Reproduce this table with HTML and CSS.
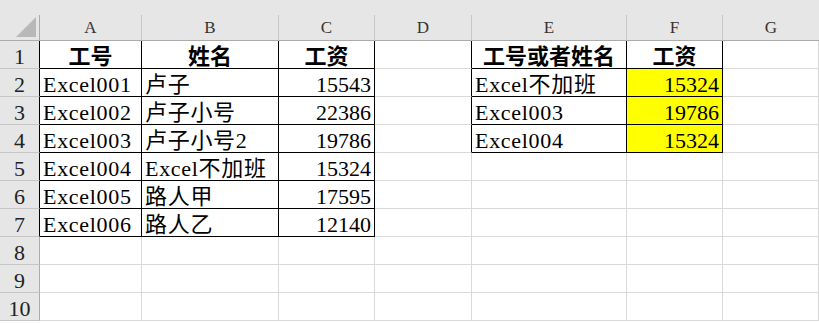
FILE: index.html
```html
<!DOCTYPE html>
<html lang="zh">
<head>
<meta charset="utf-8">
<title>Sheet</title>
<link rel="stylesheet" href="styles.css">
</head>
<body>
<div class="top"></div>
<div class="sheet">
  <div class="corner"><svg class="tri" width="20" height="20" viewBox="0 0 20 20"><polygon points="20,0 20,20 0,20" fill="#b8b8b8"/></svg></div>
  <div class="ch">A</div><div class="ch">B</div><div class="ch">C</div><div class="ch">D</div><div class="ch">E</div><div class="ch">F</div><div class="ch last">G</div>

  <div class="rh kb">1</div>
  <div class="c k hd">工号</div><div class="c k hd">姓名</div><div class="c k hd">工资</div><div class="c kr"></div>
  <div class="c k hd">工号或者姓名</div><div class="c k hd">工资</div><div class="c"></div>

  <div class="rh kb">2</div>
  <div class="c k tx">Excel001</div><div class="c k tx">卢子</div><div class="c k num">15543</div><div class="c kr"></div>
  <div class="c k tx">Excel不加班</div><div class="c k num y">15324</div><div class="c"></div>

  <div class="rh kb">3</div>
  <div class="c k tx">Excel002</div><div class="c k tx">卢子小号</div><div class="c k num">22386</div><div class="c kr"></div>
  <div class="c k tx">Excel003</div><div class="c k num y">19786</div><div class="c"></div>

  <div class="rh kb">4</div>
  <div class="c k tx">Excel003</div><div class="c k tx">卢子小号2</div><div class="c k num">19786</div><div class="c kr"></div>
  <div class="c k tx">Excel004</div><div class="c k num y">15324</div><div class="c"></div>

  <div class="rh kb">5</div>
  <div class="c k tx">Excel004</div><div class="c k tx">Excel不加班</div><div class="c k num">15324</div><div class="c"></div>
  <div class="c"></div><div class="c"></div><div class="c"></div>

  <div class="rh kb">6</div>
  <div class="c k tx">Excel005</div><div class="c k tx">路人甲</div><div class="c k num">17595</div><div class="c"></div>
  <div class="c"></div><div class="c"></div><div class="c"></div>

  <div class="rh kb">7</div>
  <div class="c k tx">Excel006</div><div class="c k tx">路人乙</div><div class="c k num">12140</div><div class="c"></div>
  <div class="c"></div><div class="c"></div><div class="c"></div>

  <div class="rh">8</div>
  <div class="c"></div><div class="c"></div><div class="c"></div><div class="c"></div>
  <div class="c"></div><div class="c"></div><div class="c"></div>

  <div class="rh">9</div>
  <div class="c"></div><div class="c"></div><div class="c"></div><div class="c"></div>
  <div class="c"></div><div class="c"></div><div class="c"></div>

  <div class="rh">10</div>
  <div class="c"></div><div class="c"></div><div class="c"></div><div class="c"></div>
  <div class="c"></div><div class="c"></div><div class="c"></div>
</div>
</body>
</html>
```
FILE: styles.css
```css
html, body {
  margin: 0;
  padding: 0;
  background: #ffffff;
  overflow: hidden;
}
body {
  width: 819px;
  height: 323px;
  font-family: "Liberation Serif", "Noto Sans CJK SC", serif;
  color: #000;
}
.top {
  height: 15px;
  background: #e6e6e6;
}
.sheet {
  display: grid;
  grid-template-columns: 40px 102px 137px 96px 97px 155px 96px 1fr;
  grid-template-rows: 26px repeat(10, 28px);
}
.sheet > div {
  box-sizing: border-box;
  border-right: 1px solid #d9d9d9;
  border-bottom: 1px solid #d9d9d9;
  overflow: hidden;
  white-space: nowrap;
}
.corner {
  background: #e6e6e6;
  display: flex;
  align-items: flex-end;
  justify-content: flex-end;
  padding: 0 3px 3px 0;
}
.sheet > .corner,
.sheet > .ch {
  border-right-color: #c6c6c6;
  border-bottom-color: #ababab;
}
.sheet > .corner {
  border-right-color: #ababab;
}
.tri {
  display: block;
}
.ch {
  background: #e6e6e6;
  color: #333;
  font-size: 17px;
  line-height: 25px;
  text-align: center;
}
.sheet > .ch.last {
  border-right: none;
}
.rh {
  background: #e6e6e6;
  color: #222;
  font-size: 22px;
  line-height: 22px;
  padding-top: 5px;
  text-align: center;
}
.sheet > .rh {
  border-right-color: #ababab;
  border-bottom-color: #c6c6c6;
}
.sheet > .rh.kb {
  border-right-color: #000;
}
.sheet > .c.k {
  border-right-color: #000;
  border-bottom-color: #000;
}
.sheet > .c.kr {
  border-right-color: #000;
}
.c {
  font-size: 22px;
  line-height: 22px;
  padding: 5px 3px 0 3px;
}
.tx {
  letter-spacing: 0.7px;
}
.num {
  text-align: right;
}
.hd {
  font-weight: bold;
  text-align: center;
}
.y {
  background: #ffff00;
}
```
